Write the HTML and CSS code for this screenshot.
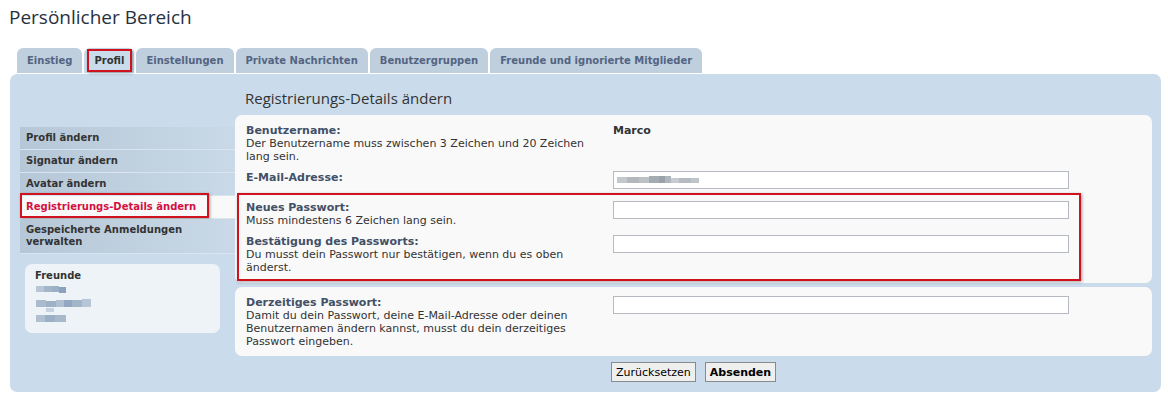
FILE: index.html
```html
<!DOCTYPE html>
<html lang="de">
<head>
<meta charset="utf-8">
<title>Persönlicher Bereich</title>
<link rel="stylesheet" href="styles.css">
</head>
<body>
<div class="page">
  <h1 class="title">Persönlicher Bereich</h1>
  <ul class="tabs">
    <li class="tab">Einstieg</li>
    <li class="tab active marked">Profil</li>
    <li class="tab">Einstellungen</li>
    <li class="tab">Private Nachrichten</li>
    <li class="tab">Benutzergruppen</li>
    <li class="tab">Freunde und ignorierte Mitglieder</li>
  </ul>
  <div class="panel">
    <aside class="side">
      <ul class="menu">
        <li class="item">Profil ändern</li>
        <li class="item">Signatur ändern</li>
        <li class="item">Avatar ändern</li>
        <li class="item current marked">Registrierungs-Details ändern</li>
        <li class="item">Gespeicherte Anmeldungen verwalten</li>
      </ul>
      <div class="friends">
        <h3 class="friends-title">Freunde</h3>
        <svg class="blur" width="60" height="50" viewBox="0 0 60 50">
          <rect x="0" y="2" width="8" height="6" fill="#b7c6d6"/>
          <rect x="8" y="2" width="8" height="6" fill="#a3b5c9"/>
          <rect x="16" y="2" width="7" height="6" fill="#9bb0c6"/>
          <rect x="23" y="3" width="7" height="6" fill="#8aa2bd"/>
          <rect x="0" y="16" width="10" height="7" fill="#aabbcd"/>
          <rect x="10" y="17" width="10" height="6" fill="#9db1c7"/>
          <rect x="20" y="16" width="8" height="7" fill="#b0c0d1"/>
          <rect x="28" y="16" width="8" height="7" fill="#93a9c2"/>
          <rect x="36" y="16" width="10" height="7" fill="#a3b5c9"/>
          <rect x="46" y="15" width="9" height="8" fill="#b7c6d6"/>
          <rect x="10" y="24" width="8" height="4" fill="#c6d2df"/>
          <rect x="0" y="31" width="9" height="7" fill="#b0c0d1"/>
          <rect x="9" y="31" width="10" height="7" fill="#9bb0c6"/>
          <rect x="19" y="31" width="11" height="7" fill="#a8b9cc"/>
        </svg>
      </div>
    </aside>
    <main class="content">
      <h2 class="heading">Registrierungs-Details ändern</h2>
      <div class="box">
        <div class="row">
          <div class="label">
            <div class="name">Benutzername:</div>
            <div class="desc">Der Benutzername muss zwischen 3 Zeichen und 20 Zeichen lang sein.</div>
          </div>
          <div class="value"><strong class="username">Marco</strong></div>
        </div>
        <div class="row">
          <div class="label"><div class="name">E-Mail-Adresse:</div></div>
          <div class="value">
            <div class="input">
              <svg class="blur-mail" width="86" height="8" viewBox="0 0 86 8">
                <rect x="0" y="1" width="10" height="6" fill="#c4c8cc"/>
                <rect x="10" y="1" width="12" height="6" fill="#b3b8be"/>
                <rect x="22" y="1" width="10" height="6" fill="#bcc1c6"/>
                <rect x="32" y="0" width="10" height="7" fill="#a5abb2"/>
                <rect x="42" y="0" width="6" height="7" fill="#9aa1a9"/>
                <rect x="48" y="0" width="6" height="7" fill="#b1b6bc"/>
                <rect x="54" y="2" width="8" height="5" fill="#c8ccd0"/>
                <rect x="62" y="2" width="12" height="5" fill="#b6bbc1"/>
                <rect x="74" y="2" width="8" height="5" fill="#c0c5ca"/>
              </svg>
            </div>
          </div>
        </div>
        <div class="group marked">
          <div class="row">
            <div class="label">
              <div class="name">Neues Passwort:</div>
              <div class="desc">Muss mindestens 6 Zeichen lang sein.</div>
            </div>
            <div class="value"><div class="input"></div></div>
          </div>
          <div class="row last">
            <div class="label">
              <div class="name">Bestätigung des Passworts:</div>
              <div class="desc">Du musst dein Passwort nur bestätigen, wenn du es oben änderst.</div>
            </div>
            <div class="value"><div class="input"></div></div>
          </div>
        </div>
      </div>
      <div class="box second">
        <div class="row last">
          <div class="label">
            <div class="name">Derzeitiges Passwort:</div>
            <div class="desc">Damit du dein Passwort, deine E-Mail-Adresse oder deinen Benutzernamen ändern kannst, musst du dein derzeitiges Passwort eingeben.</div>
          </div>
          <div class="value"><div class="input"></div></div>
        </div>
      </div>
      <div class="actions">
        <button class="btn">Zurücksetzen</button>
        <button class="btn primary">Absenden</button>
      </div>
    </main>
  </div>
</div>
</body>
</html>
```

FILE: styles.css
```css
* { box-sizing: border-box; }
html, body { margin: 0; padding: 0; background: #fff; }
body {
  font-family: "DejaVu Sans", Verdana, sans-serif;
  font-size: 11px;
  line-height: 13px;
  color: #333;
}
.page { width: 1168px; padding: 0 0 0 10px; }
.title {
  margin: 0 0 0 -1px;
  padding: 4px 0 0 0;
  height: 48px;
  font-family: "Open Sans", "DejaVu Sans", sans-serif;
  font-weight: 400;
  font-size: 19px;
  line-height: 26px;
  color: #28313f;
}
.tabs {
  list-style: none;
  margin: 0 0 1px 7px;
  padding: 0;
  display: flex;
  gap: 2px;
  height: 25px;
}
.tab {
  position: relative;
  height: 25px;
  padding: 0 10px;
  background: #bfcfde;
  border-radius: 6px 6px 0 0;
  font-weight: bold;
  color: #536482;
  line-height: 26px;
  font-size: 10px;
}
.tab.active { background: #cadceb; color: #333; }
.marked::after {
  content: "";
  position: absolute;
  border: 2px solid #d0121f;
  box-shadow: 1px 1px 3px rgba(0,0,0,0.35);
  pointer-events: none;
}
.tab.marked::after { top: 1px; left: 3px; right: 2px; bottom: 1px; }

.panel {
  width: 1151px;
  background: #cadceb;
  border-radius: 7px;
  display: flex;
  padding: 0 9px 10px 0;
}
.side { width: 225px; flex: none; }
.menu { list-style: none; margin: 53px 0 0 10px; padding: 0; }
.item {
  position: relative;
  padding: 5px 6px;
  line-height: 12px;
  font-size: 10px;
  font-weight: bold;
  color: #333;
  background: linear-gradient(to right, #b6c7d7, #c9d9e7);
  border-bottom: 1px solid #d9e4ee;
}
.item.current { background: #f9f9f9; color: #d31141; }
.item.marked::after { top: -3px; left: 0; width: 185px; bottom: 0; }
.friends {
  margin: 10px 0 0 15px;
  width: 195px;
  height: 69px;
  background: #eef3f8;
  border-radius: 7px;
  padding: 5px 10px;
}
.friends-title { margin: 0; font-size: 10px; line-height: 13px; font-weight: bold; color: #333; }
.blur { display: block; margin-top: 2px; margin-left: 1px; }

.content { flex: 1; }
.heading {
  margin: 14px 0 7px 10px;
  font-family: "Open Sans", "DejaVu Sans", sans-serif;
  font-weight: 400;
  font-size: 15px;
  line-height: 20px;
  color: #333;
}
.box {
  background: #f9f9f9;
  border-radius: 7px;
  padding: 9px 0 9px 11px;
}
.box.second { margin-top: 4px; padding-bottom: 8px; }
.row {
  display: grid;
  grid-template-columns: 367px 456px;
  margin-bottom: 8px;
  min-height: 22px;
}
.row.last { margin-bottom: 0; }
.label { padding-right: 12px; }
.name { font-weight: bold; color: #425067; }
.desc { color: #333; }
.username { font-weight: bold; color: #333; }
.input {
  height: 18px;
  border: 1px solid #b4bac0;
  background: #fff;
  padding: 4px 3px;
}
.blur-mail { display: block; }
.group { position: relative; }
.group.marked::after { top: -8px; left: -9px; width: 840px; bottom: -7px; }

.actions { display: flex; gap: 9px; padding: 6px 0 0 376px; }
.btn {
  height: 20px;
  font-family: "DejaVu Sans", Verdana, sans-serif;
  font-size: 11px;
  padding: 0 4px;
  background: #efefef;
  border: 1px solid #8a8a8a;
  color: #000;
}
.btn.primary { font-weight: bold; }
```
